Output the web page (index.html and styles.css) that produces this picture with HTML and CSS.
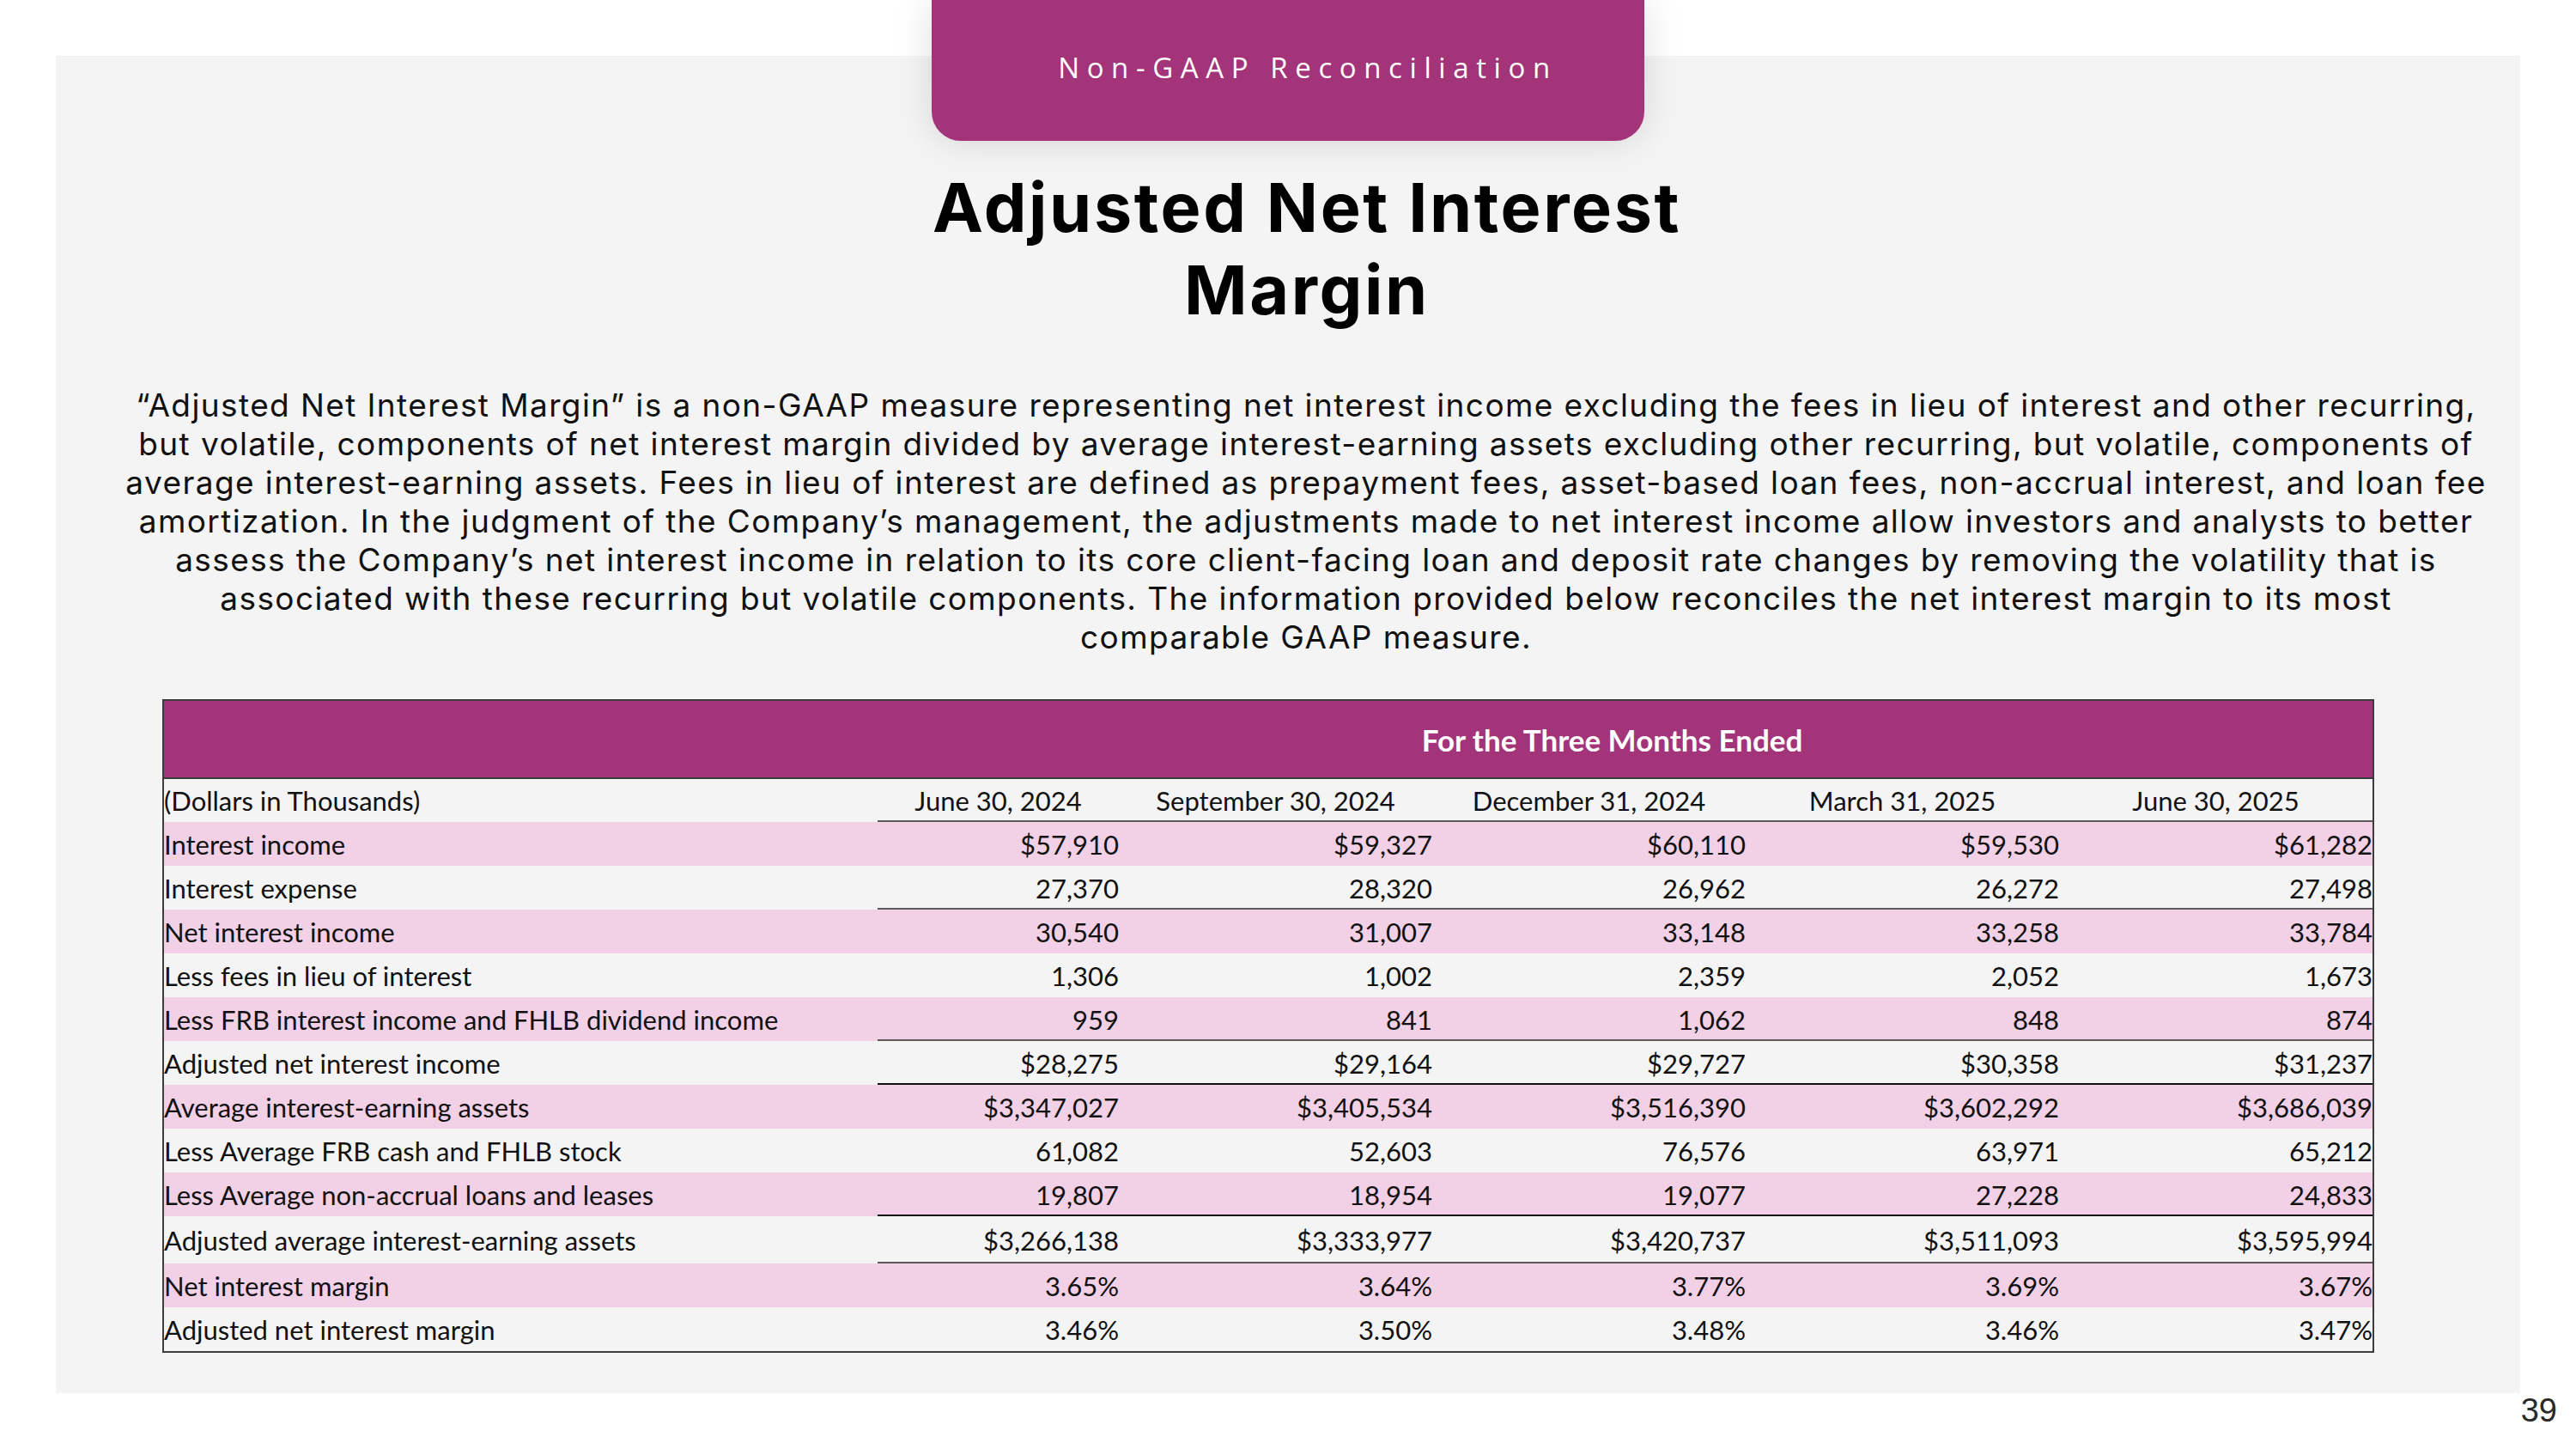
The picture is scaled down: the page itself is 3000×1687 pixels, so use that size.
FILE: index.html
```html
<!DOCTYPE html>
<html lang="en">
<head>
<meta charset="utf-8">
<title>Adjusted Net Interest Margin</title>
<link rel="stylesheet" href="styles.css">
</head>
<body>
<div class="slide">
  <section class="panel">
    <div class="tab"><span class="tab-text">Non-GAAP Reconciliation</span></div>
    <h1 class="title">Adjusted Net Interest<br>Margin</h1>
    <p class="intro">“Adjusted Net Interest Margin” is a non-GAAP measure representing net interest income excluding the fees in lieu of interest and other recurring,<br>but volatile, components of net interest margin divided by average interest-earning assets excluding other recurring, but volatile, components of<br>average interest-earning assets. Fees in lieu of interest are defined as prepayment fees, asset-based loan fees, non-accrual interest, and loan fee<br>amortization. In the judgment of the Company’s management, the adjustments made to net interest income allow investors and analysts to better<br>assess the Company’s net interest income in relation to its core client-facing loan and deposit rate changes by removing the volatility that is<br>associated with these recurring but volatile components. The information provided below reconciles the net interest margin to its most<br>comparable GAAP measure.</p>
    <table class="recon">
      <colgroup>
        <col class="c-label"><col class="c-first"><col class="c-date"><col class="c-date"><col class="c-date"><col class="c-date">
      </colgroup>
      <thead>
        <tr class="band">
          <th></th>
          <th colspan="5" class="band-title">For the Three Months Ended</th>
        </tr>
        <tr class="heads">
          <td class="label">(Dollars in Thousands)</td>
          <td class="date ul">June 30, 2024</td>
          <td class="date ul">September 30, 2024</td>
          <td class="date ul">December 31, 2024</td>
          <td class="date ul">March 31, 2025</td>
          <td class="date ul">June 30, 2025</td>
        </tr>
      </thead>
      <tbody>
        <tr class="pink"><td class="label">Interest income</td><td>$57,910</td><td>$59,327</td><td>$60,110</td><td>$59,530</td><td>$61,282</td></tr>
        <tr class="ul-row"><td class="label">Interest expense</td><td>27,370</td><td>28,320</td><td>26,962</td><td>26,272</td><td>27,498</td></tr>
        <tr class="pink"><td class="label">Net interest income</td><td>30,540</td><td>31,007</td><td>33,148</td><td>33,258</td><td>33,784</td></tr>
        <tr><td class="label">Less fees in lieu of interest</td><td>1,306</td><td>1,002</td><td>2,359</td><td>2,052</td><td>1,673</td></tr>
        <tr class="pink ul-row"><td class="label">Less FRB interest income and FHLB dividend income</td><td>959</td><td>841</td><td>1,062</td><td>848</td><td>874</td></tr>
        <tr class="ul-row dark"><td class="label">Adjusted net interest income</td><td>$28,275</td><td>$29,164</td><td>$29,727</td><td>$30,358</td><td>$31,237</td></tr>
        <tr class="pink"><td class="label">Average interest-earning assets</td><td>$3,347,027</td><td>$3,405,534</td><td>$3,516,390</td><td>$3,602,292</td><td>$3,686,039</td></tr>
        <tr><td class="label">Less Average FRB cash and FHLB stock</td><td>61,082</td><td>52,603</td><td>76,576</td><td>63,971</td><td>65,212</td></tr>
        <tr class="pink ul-row dark"><td class="label">Less Average non-accrual loans and leases</td><td>19,807</td><td>18,954</td><td>19,077</td><td>27,228</td><td>24,833</td></tr>
        <tr class="ul-row tall"><td class="label">Adjusted average interest-earning assets</td><td>$3,266,138</td><td>$3,333,977</td><td>$3,420,737</td><td>$3,511,093</td><td>$3,595,994</td></tr>
        <tr class="pink"><td class="label">Net interest margin</td><td>3.65%</td><td>3.64%</td><td>3.77%</td><td>3.69%</td><td>3.67%</td></tr>
        <tr><td class="label">Adjusted net interest margin</td><td>3.46%</td><td>3.50%</td><td>3.48%</td><td>3.46%</td><td>3.47%</td></tr>
      </tbody>
    </table>
  </section>
  <footer class="page-num">39</footer>
</div>
</body>
</html>
```

FILE: styles.css
```css
html, body {
  margin: 0;
  padding: 0;
  background: #ffffff;
}

.slide {
  width: 3000px;
  height: 1687px;
  overflow: hidden;
  font-family: "Inter", "Open Sans", sans-serif;
  color: #111;
}

.panel {
  position: relative;
  margin: 65px 65px 0 65px;
  height: 1557px;
  background: #f4f4f4;
  display: flex;
  flex-direction: column;
  align-items: center;
}

.tab {
  position: absolute;
  top: -65px;
  left: 1020px;
  width: 830px;
  height: 164px;
  background: #a3347a;
  border-radius: 0 0 34px 34px;
  box-shadow: 0 0 45px rgba(0, 0, 0, 0.13);
  display: flex;
  align-items: center;
  justify-content: center;
  padding-bottom: 8px;
  padding-left: 46px;
  box-sizing: border-box;
}

.tab-text {
  color: #ffffff;
  font-family: "Open Sans", sans-serif;
  font-weight: 500;
  font-size: 33px;
  letter-spacing: 8.6px;
  white-space: nowrap;
}

.title {
  margin: 128px 0 0 44px;
  font-family: "Inter", "Open Sans", sans-serif;
  font-weight: 700;
  font-size: 79px;
  line-height: 96px;
  text-align: center;
  color: #000;
  letter-spacing: 2.6px;
}

.intro {
  margin: 64px 0 0 42px;
  font-family: "Inter", "Open Sans", sans-serif;
  font-size: 37px;
  line-height: 45px;
  letter-spacing: 1.4px;
  text-align: center;
  white-space: nowrap;
  color: #111;
}

.recon {
  align-self: flex-start;
  margin: 50px 0 0 124px;
  width: 2574px;
  table-layout: fixed;
  border-collapse: separate;
  border-spacing: 0;
  border: 2px solid #3c3c3c;
  font-family: "Lato", sans-serif;
  font-size: 31px;
  color: #111;
}

.c-label { width: 831px; }
.c-first { width: 281px; }
.c-date { width: 365px; }

.recon td,
.recon th {
  padding: 0;
  height: 51px;
  white-space: nowrap;
  text-align: right;
  vertical-align: middle;
}

.recon td.label {
  text-align: left;
}

.band th {
  height: 89px;
  background: #a3347a;
  border-bottom: 2px solid #3c3c3c;
}

.band-title {
  color: #fff;
  font-weight: 700;
  font-size: 35px;
  text-align: center !important;
  padding-right: 30px !important;
}

.heads td {
  height: 50px;
}

.recon td.date {
  text-align: center;
}

.recon td.ul,
.ul-row td:not(.label) {
  box-shadow: inset 0 -2px 0 #5e5a5c;
}

.dark td:not(.label) {
  box-shadow: inset 0 -2px 0 #111;
}

.pink td {
  background: #f2d0e5;
}

.tall td {
  height: 55px;
}

.page-num {
  text-align: right;
  padding-right: 22px;
  font-family: "Liberation Sans", Arial, sans-serif;
  font-size: 38px;
  line-height: 40px;
  color: #2a2a2a;
}
```
